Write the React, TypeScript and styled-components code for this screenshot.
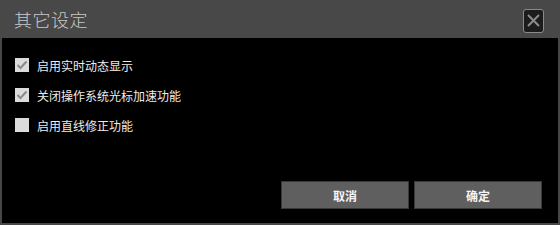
import styled, { createGlobalStyle } from 'styled-components';

const GlobalStyle = createGlobalStyle`
  html, body { margin: 0; padding: 0; background: #000; }
  body { font-family: "Noto Sans CJK SC", "Liberation Sans", sans-serif; }
`;

const Window = styled.div`
  width: 560px;
  height: 225px;
  box-sizing: border-box;
  display: flex;
  flex-direction: column;
  background: #474747;
`;

const TitleBar = styled.div`
  height: 38px;
  display: flex;
  align-items: center;
  justify-content: space-between;
  padding: 0 16px 0 14px;
  background: #484848;
`;

const Title = styled.div`
  color: #c9c9c9;
  font-size: 18px;
  font-weight: 300;
  letter-spacing: 0.5px;
`;

const CloseButton = styled.div`
  width: 19px;
  height: 22px;
  margin-top: 3px;
  border: 1px solid #8a8a8a;
  border-radius: 3px;
  background: #1c1c1c;
  display: flex;
  align-items: center;
  justify-content: center;
`;

const Body = styled.div`
  flex: 1;
  margin: 0 2px 2px 2px;
  background: #000;
  display: flex;
  flex-direction: column;
  padding: 19px 13px 0 13px;
`;

const Options = styled.div`
  display: flex;
  flex-direction: column;
  gap: 14px;
`;

const Row = styled.label`
  display: flex;
  align-items: center;
  gap: 8px;
  height: 16px;
  color: #ececec;
  font-size: 12px;
`;

const Box = styled.span`
  width: 14px;
  height: 14px;
  background: #dcdcdc;
  display: flex;
  align-items: center;
  justify-content: center;
`;

const Buttons = styled.div`
  margin-top: auto;
  margin-bottom: 14px;
  display: flex;
  justify-content: flex-end;
  gap: 5px;
  padding-right: 3px;
`;

const Button = styled.div`
  width: 128px;
  height: 28px;
  box-sizing: border-box;
  background: #5f5f5f;
  border: 1px solid #3a3a3a;
  color: #f5f5f5;
  font-size: 12px;
  font-weight: 700;
  display: flex;
  align-items: center;
  justify-content: center;
`;

const options = [
  { label: '启用实时动态显示', checked: true },
  { label: '关闭操作系统光标加速功能', checked: true },
  { label: '启用直线修正功能', checked: false },
];

export default function App() {
  return (
    <>
      <GlobalStyle />
      <Window>
        <TitleBar>
          <Title>其它设定</Title>
          <CloseButton>
            <svg width="15" height="15" viewBox="0 0 15 15">
              <path d="M2 2 L13 13 M13 2 L2 13" stroke="#8c8c8c" strokeWidth="2" />
            </svg>
          </CloseButton>
        </TitleBar>
        <Body>
          <Options>
            {options.map((o) => (
              <Row key={o.label}>
                <Box>
                  {o.checked && (
                    <svg width="12" height="12" viewBox="0 0 12 12">
                      <path d="M1.5 6 L4.5 9 L10.5 2.5" stroke="#8a8a8a" strokeWidth="2" fill="none" />
                    </svg>
                  )}
                </Box>
                {o.label}
              </Row>
            ))}
          </Options>
          <Buttons>
            <Button>取消</Button>
            <Button>确定</Button>
          </Buttons>
        </Body>
      </Window>
    </>
  );
}
